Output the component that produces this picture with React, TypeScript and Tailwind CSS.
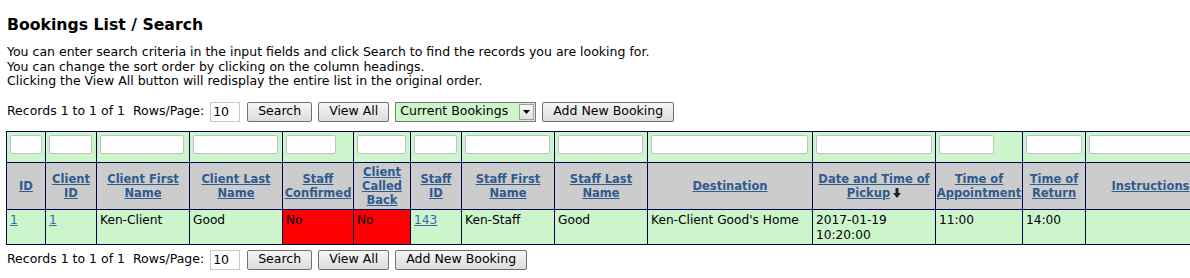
import React from 'react'

const FONT = { fontFamily: '"DejaVu Sans", Verdana, sans-serif' }

const COLS = [
  { label: ['ID'], w: 39, input: 32 },
  { label: ['Client', 'ID'], w: 51, input: 43 },
  { label: ['Client First', 'Name'], w: 93, input: 84 },
  { label: ['Client Last', 'Name'], w: 93, input: 85 },
  { label: ['Staff', 'Confirmed'], w: 71, input: 50 },
  { label: ['Client', 'Called', 'Back'], w: 57, input: 49 },
  { label: ['Staff', 'ID'], w: 51, input: 43 },
  { label: ['Staff First', 'Name'], w: 93, input: 85 },
  { label: ['Staff Last', 'Name'], w: 93, input: 85 },
  { label: ['Destination'], w: 165, input: 157 },
  { label: ['Date and Time of', 'Pickup'], w: 123, input: 116, sorted: true },
  { label: ['Time of', 'Appointment'], w: 87, input: 55 },
  { label: ['Time of', 'Return'], w: 63, input: 56 },
  { label: ['Instructions'], w: 130, input: 118 },
]

function Btn({ children }: { children: React.ReactNode }) {
  return (
    <button
      type="button"
      className="h-[20px] px-[10px] border border-[#707070] rounded-[2px] bg-gradient-to-b from-[#f6f6f6] to-[#dcdcdc] text-[12.5px] leading-none text-black"
    >
      {children}
    </button>
  )
}

function Controls({ withSelect }: { withSelect?: boolean }) {
  return (
    <div className="flex items-center text-[12.5px] h-[20px]">
      <span>Records 1 to 1 of 1&nbsp;&nbsp;Rows/Page:</span>
      <input
        readOnly
        value="10"
        className="ml-[6px] w-[30px] h-[20px] border border-[#c8c8c8] px-[2px] text-[12.5px] outline-none"
      />
      <div className="ml-[7px] flex gap-[6px] items-center">
        <Btn>Search</Btn>
        <Btn>View All</Btn>
        {withSelect && (
          <div className="flex items-center h-[20px] w-[141px] border border-[#7a7a7a] bg-[#ccf5cc]">
            <span className="flex-1 pl-[4px] text-[12.5px]">Current Bookings</span>
            <span className="w-[15px] h-[16px] mr-[1px] border border-[#a0a0a0] bg-gradient-to-b from-[#fafafa] to-[#e0e0e0] flex items-center justify-center">
              <svg width="7" height="4" viewBox="0 0 7 4">
                <path d="M0 0H7L3.5 4Z" fill="#000" />
              </svg>
            </span>
          </div>
        )}
        <Btn>Add New Booking</Btn>
      </div>
    </div>
  )
}

function SortArrow() {
  return (
    <svg width="8" height="10" viewBox="0 0 8 10" className="inline-block ml-[3px] align-[-1px]">
      <path d="M2.5 0H5.5V5H8L4 10L0 5H2.5Z" fill="#222" />
    </svg>
  )
}

export default function App() {
  const total = COLS.reduce((s, c) => s + c.w, 0)
  const link = 'text-[#3a6ea5] underline'
  const cell = 'border border-[#000050] px-[3px] pt-[3px]'
  return (
    <div className="px-[7px] pt-[15px] text-black bg-white min-w-max" style={FONT}>
      <h1 className="text-[15.7px] font-bold leading-[20px]">Bookings List / Search</h1>
      <div className="mt-[10px] text-[12.5px] leading-[14.5px]">
        <p>You can enter search criteria in the input fields and click Search to find the records you are looking for.</p>
        <p>You can change the sort order by clicking on the column headings.</p>
        <p>Clicking the View All button will redisplay the entire list in the original order.</p>
      </div>
      <div className="mt-[13px]">
        <Controls withSelect />
      </div>
      <table
        className="mt-[9px] -ml-[1px] border-collapse table-fixed text-[12.2px]"
        style={{ width: total }}
      >
        <colgroup>
          {COLS.map((c, i) => (
            <col key={i} style={{ width: c.w }} />
          ))}
        </colgroup>
        <thead>
          <tr className="bg-[#ccf5cc]">
            {COLS.map((c, i) => (
              <td key={i} className="border border-[#000050] pt-[3px] pb-[8px] px-[3px] align-top">
                <input
                  readOnly
                  className="block h-[19px] bg-white border border-[#c0c0c0] rounded-[2px] outline-none"
                  style={{ width: c.input }}
                />
              </td>
            ))}
          </tr>
          <tr className="bg-[#cccccc]">
            {COLS.map((c, i) => (
              <th
                key={i}
                className="border border-[#000050] px-0 py-[2px] text-center font-bold text-[11.5px] leading-[14px] text-[#2f5b8d] align-middle h-[46px]"
              >
                {c.label.map((l, j) => (
                  <div key={j} className="whitespace-nowrap">
                    <span className="underline">{l}</span>
                    {c.sorted && j === c.label.length - 1 && <SortArrow />}
                  </div>
                ))}
              </th>
            ))}
          </tr>
        </thead>
        <tbody>
          <tr className="bg-[#ccf5cc] align-top leading-[15px]">
            <td className={`${cell} h-[35px]`}><span className={link}>1</span></td>
            <td className={cell}><span className={link}>1</span></td>
            <td className={cell}>Ken-Client</td>
            <td className={cell}>Good</td>
            <td className={`${cell} bg-[#ff0000]`}>No</td>
            <td className={`${cell} bg-[#ff0000]`}>No</td>
            <td className={cell}><span className={link}>143</span></td>
            <td className={cell}>Ken-Staff</td>
            <td className={cell}>Good</td>
            <td className={`${cell} whitespace-nowrap`}>Ken-Client Good's Home</td>
            <td className={cell}>2017-01-19<br />10:20:00</td>
            <td className={cell}>11:00</td>
            <td className={cell}>14:00</td>
            <td className={cell}></td>
          </tr>
        </tbody>
      </table>
      <div className="mt-[5px]">
        <Controls />
      </div>
    </div>
  )
}
